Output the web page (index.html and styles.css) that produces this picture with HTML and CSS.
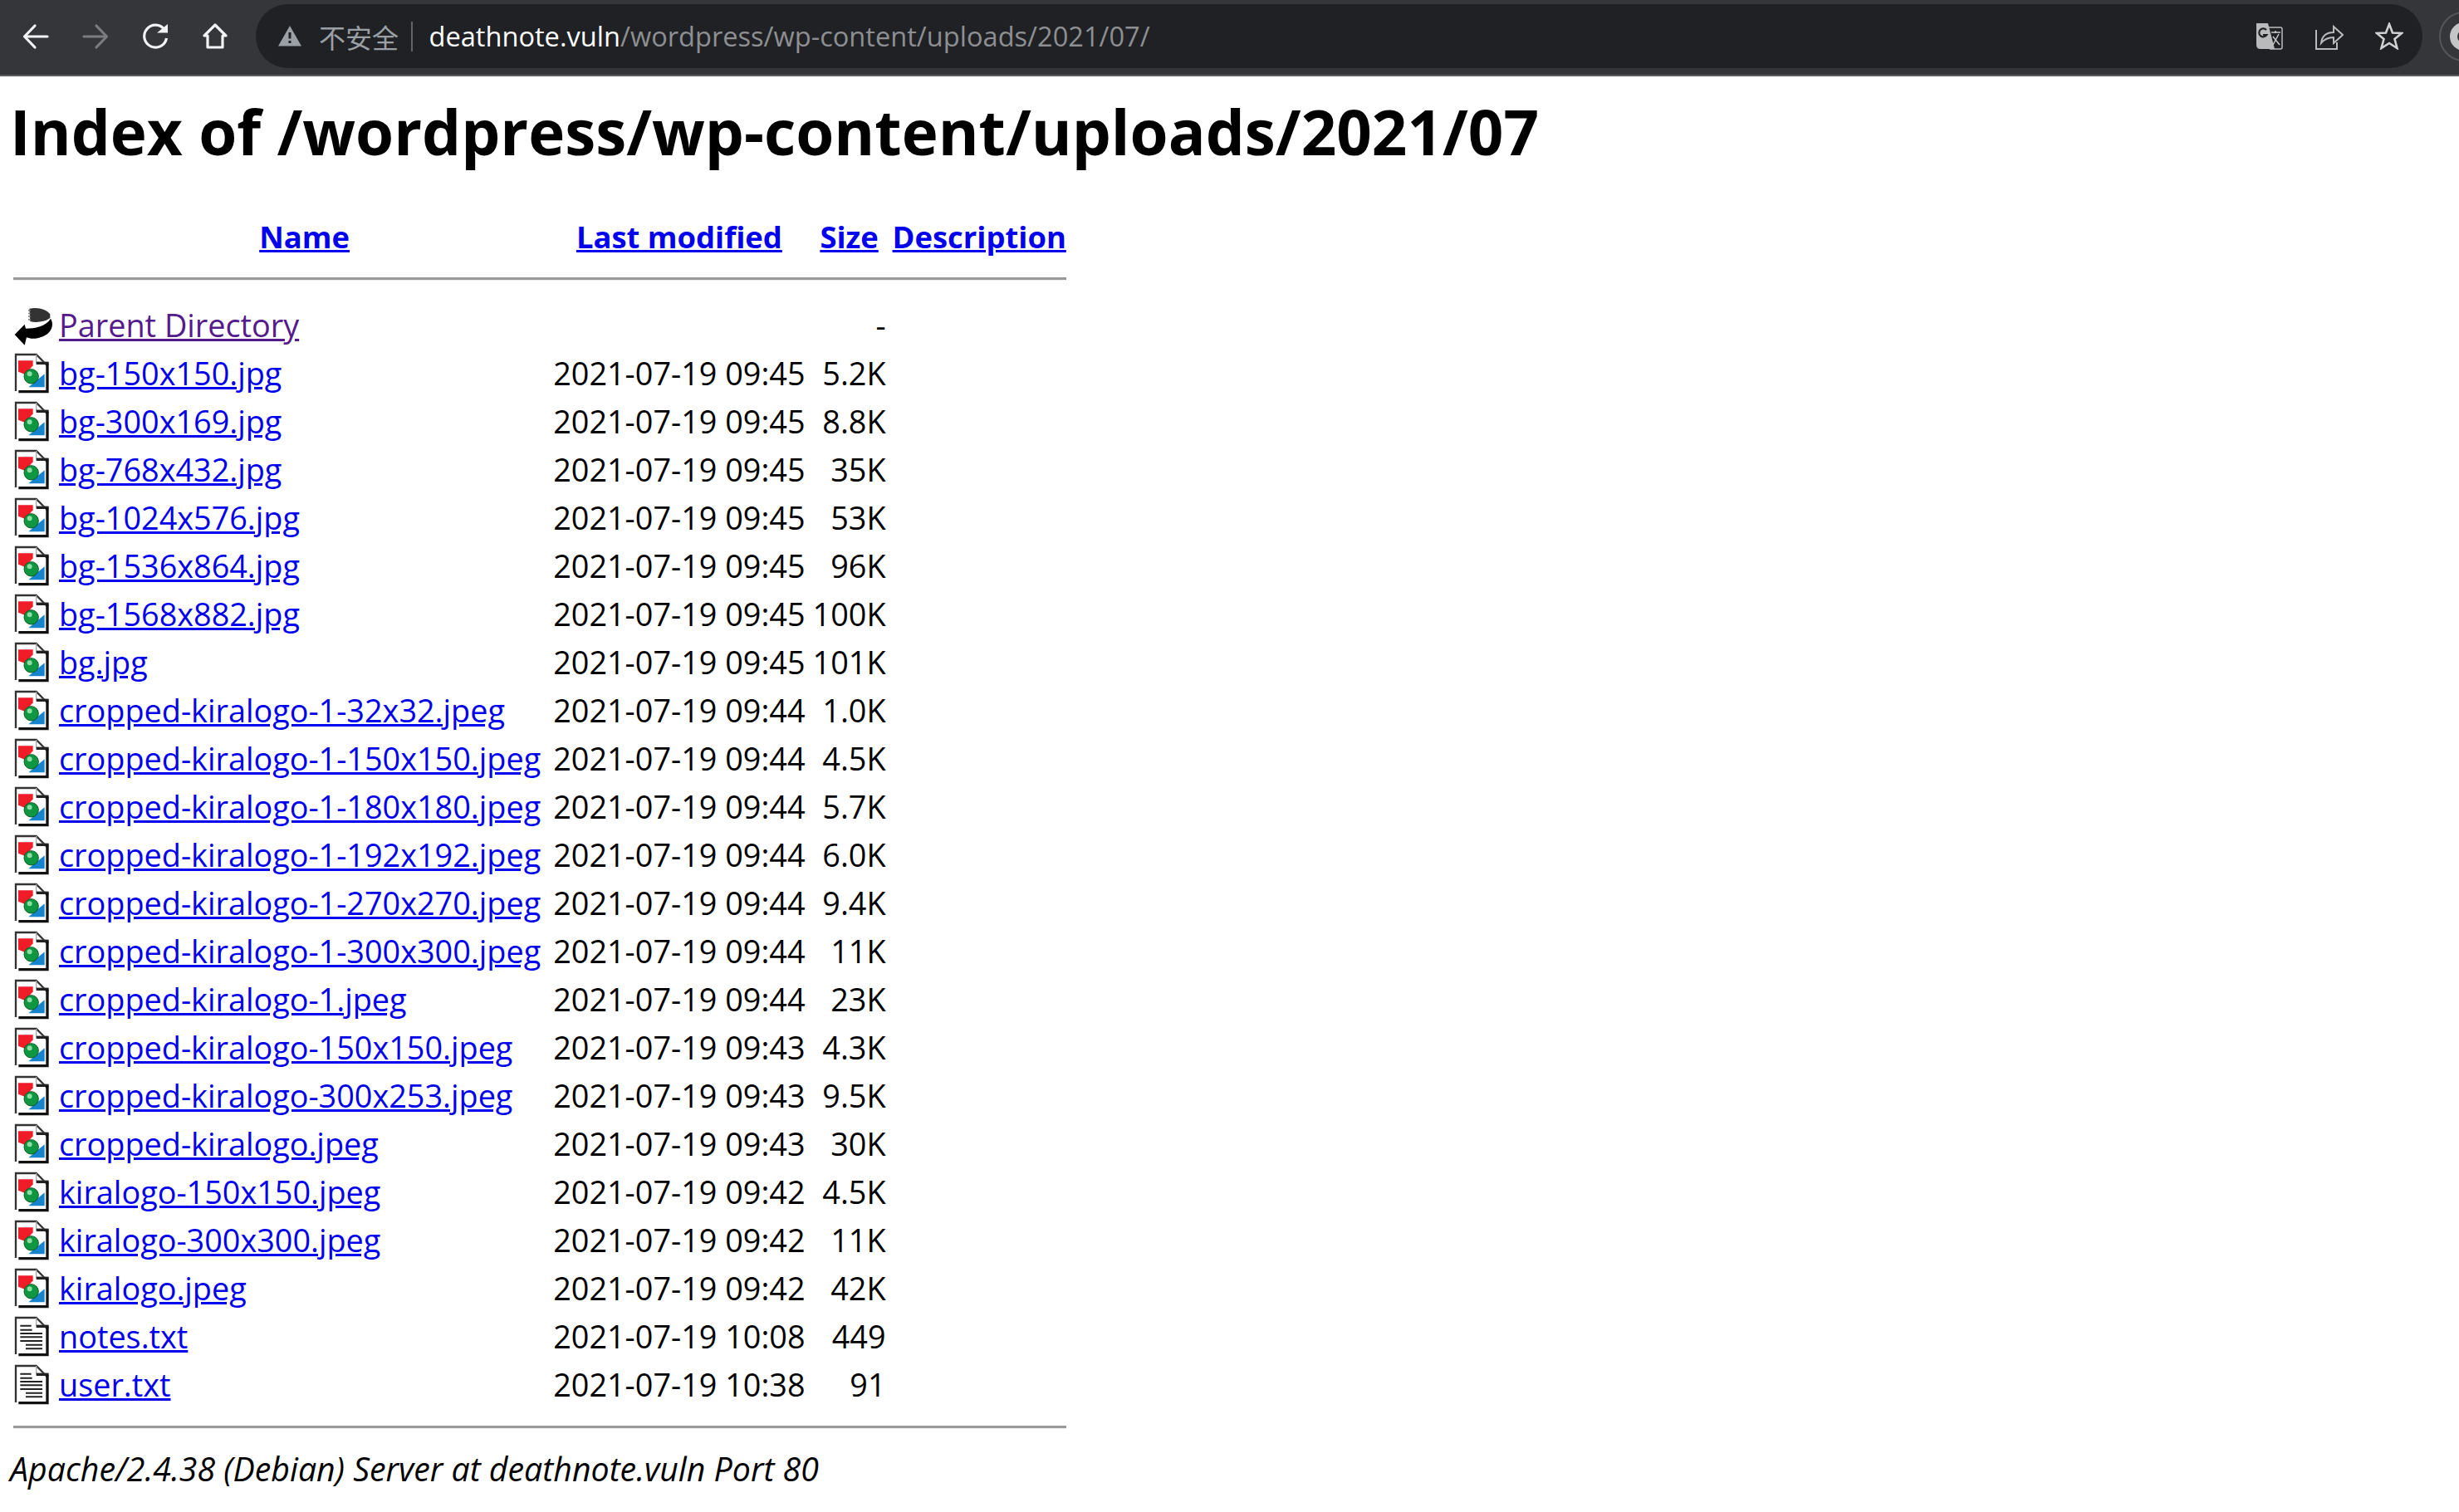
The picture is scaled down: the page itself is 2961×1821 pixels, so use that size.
FILE: index.html
```html
<!DOCTYPE html>
<html lang="zh">
<head>
    <meta charset="UTF-8">
    <title>Index of /wordpress/wp-content/uploads/2021/07</title>
    <link rel="stylesheet" href="styles.css">
</head>
<body>
    <svg class="sprites" width="0" height="0">
        <symbol id="ico-back" viewBox="17 12 150 150">
            <path d="M75 26 78 72C100 78 130 74 150 60L150 46C135 30 112 20 75 26z" fill="#333"/>
            <path d="M75 30V70" stroke="#888" stroke-width="8" stroke-dasharray="5 6"/>
            <path d="M22 120 58 83 62 98C95 98 135 90 152 62 168 90 150 120 115 130 95 137 75 135 65 130L58 158z" fill="#000"/>
        </symbol>
        <symbol id="ico-image" viewBox="17 12 150 150">
            <path d="M26 18H100L142 60V152H26z" fill="#fff"/>
            <path d="M26 150V18H100L142 60" fill="none" stroke="#333" stroke-width="7"/>
            <path d="M100 18V46H142" fill="none" stroke="#aaa" stroke-width="4"/>
            <path d="M100 44H145V54H100z" fill="#222"/>
            <path d="M140 50V152H36" fill="none" stroke="#111" stroke-width="10"/>
            <path d="M35 40H88V58L60 90 35 80z" fill="#f01c28"/>
            <path d="M130 88V136H72z" fill="#1684cc"/>
            <circle cx="82" cy="97" r="26" fill="#0e9640" stroke="#0a5a24" stroke-width="3"/>
            <circle cx="76" cy="88" r="9" fill="#8cdca4"/>
        </symbol>
        <symbol id="ico-text" viewBox="17 12 150 150">
            <path d="M26 18H100L142 60V152H26z" fill="#fff"/>
            <path d="M26 150V18H100L142 60" fill="none" stroke="#333" stroke-width="7"/>
            <path d="M100 18V46H142" fill="none" stroke="#aaa" stroke-width="4"/>
            <path d="M100 44H145V54H100z" fill="#222"/>
            <path d="M140 50V152H36" fill="none" stroke="#111" stroke-width="10"/>
            <path d="M42 47H82M42 62H85M42 75H122M42 88H122M42 102H122M62 116H122M62 130H122" stroke="#222" stroke-width="6"/>
        </symbol>
    </svg>

    <div class="toolbar">
        <svg class="tool" width="36" height="36" viewBox="0 0 36 36"><path d="M32 18H6M17 5 4.500 18 17 31" fill="none" stroke="#f1f3f4" stroke-width="3.200" stroke-linecap="round" stroke-linejoin="round"/></svg>
        <svg class="tool" width="36" height="36" viewBox="0 0 36 36"><path d="M4 18H30M19 5 31.500 18 19 31" fill="none" stroke="#7b7c7f" stroke-width="3.200" stroke-linecap="round" stroke-linejoin="round"/></svg>
        <svg class="tool" width="36" height="36" viewBox="0 0 36 36"><path d="M29 9.500A13.500 13.500 0 1 0 31.500 20" fill="none" stroke="#f1f3f4" stroke-width="3.200"/><path d="M20 13.500H33V3z" fill="#f1f3f4"/></svg>
        <svg class="tool" width="36" height="36" viewBox="0 0 36 36"><path d="M18 4 31 17H27V31H9V17H5z" fill="none" stroke="#f1f3f4" stroke-width="3.200" stroke-linejoin="round"/></svg>
        <div class="omnibox">
            <svg class="warn" width="28" height="25" viewBox="0 0 28 25"><path d="M14 0 28 24.500H0z" fill="#9aa0a6"/><path d="M12.500 8H15.500V15.500H12.500zM12.500 18H15.500V21H12.500z" fill="#202124"/></svg>
            <span class="insecure">不安全</span>
            <span class="sep"></span>
            <span class="url"><span class="host">deathnote.vuln</span>/wordpress/wp-content/uploads/2021/07/</span>
            <span class="omni-actions">
                <svg width="33" height="33" viewBox="0 0 33 33"><path d="M1 1H15L23 32H6Q1 32 1 27z" fill="#b9babb"/><path d="M15 6H30Q32 6 32 8V30Q32 32 30 32H17" fill="none" stroke="#b9babb" stroke-width="1.500"/><path d="M19 12H30M24 10V13M21 27 28 14M21 17 29 27" fill="none" stroke="#c8c9ca" stroke-width="1.500"/><path d="M13 9A5 5 0 1 0 13.500 15H9" fill="none" stroke="#202124" stroke-width="2.200"/></svg>
                <svg width="34" height="33" viewBox="0 0 34 33"><path d="M1 9V32H26V24" fill="none" stroke="#b9babb" stroke-width="2"/><path d="M7 25C8 16 14 12 22 12V5L33 15 22 25V18C15 18 11 20 7 25z" fill="none" stroke="#b9babb" stroke-width="2"/></svg>
                <svg width="34" height="33" viewBox="0 0 34 33"><path d="M17 2 21 12.500 32 13 23.500 20 26.500 31 17 25 7.500 31 10.500 20 2 13 13 12.500z" fill="none" stroke="#d0d1d2" stroke-width="2.600"/></svg>
            </span>
        </div>
        <div class="avatar"><span class="avatar-in"></span></div>
    </div>

    <div class="page">
        <h1>Index of /wordpress/wp-content/uploads/2021/07</h1>
        <table class="listing">
            <tr>
                <th class="col-icon"></th>
                <th><a href="#">Name</a></th>
                <th><a href="#">Last modified</a></th>
                <th class="size-head"><a href="#">Size</a></th>
                <th><a href="#">Description</a></th>
            </tr>
            <tr><th colspan="5"><hr class="rule-top"></th></tr>
            <tr><td class="col-icon"><svg class="ico"><use href="#ico-back"/></svg></td><td><a class="seen" href="#">Parent Directory</a></td><td></td><td class="size">- </td><td></td></tr>
            <tr><td class="col-icon"><svg class="ico"><use href="#ico-image"/></svg></td><td><a href="#">bg-150x150.jpg</a></td><td>2021-07-19 09:45</td><td class="size">5.2K</td><td></td></tr>
            <tr><td class="col-icon"><svg class="ico"><use href="#ico-image"/></svg></td><td><a href="#">bg-300x169.jpg</a></td><td>2021-07-19 09:45</td><td class="size">8.8K</td><td></td></tr>
            <tr><td class="col-icon"><svg class="ico"><use href="#ico-image"/></svg></td><td><a href="#">bg-768x432.jpg</a></td><td>2021-07-19 09:45</td><td class="size">35K</td><td></td></tr>
            <tr><td class="col-icon"><svg class="ico"><use href="#ico-image"/></svg></td><td><a href="#">bg-1024x576.jpg</a></td><td>2021-07-19 09:45</td><td class="size">53K</td><td></td></tr>
            <tr><td class="col-icon"><svg class="ico"><use href="#ico-image"/></svg></td><td><a href="#">bg-1536x864.jpg</a></td><td>2021-07-19 09:45</td><td class="size">96K</td><td></td></tr>
            <tr><td class="col-icon"><svg class="ico"><use href="#ico-image"/></svg></td><td><a href="#">bg-1568x882.jpg</a></td><td>2021-07-19 09:45</td><td class="size">100K</td><td></td></tr>
            <tr><td class="col-icon"><svg class="ico"><use href="#ico-image"/></svg></td><td><a href="#">bg.jpg</a></td><td>2021-07-19 09:45</td><td class="size">101K</td><td></td></tr>
            <tr><td class="col-icon"><svg class="ico"><use href="#ico-image"/></svg></td><td><a href="#">cropped-kiralogo-1-32x32.jpeg</a></td><td>2021-07-19 09:44</td><td class="size">1.0K</td><td></td></tr>
            <tr><td class="col-icon"><svg class="ico"><use href="#ico-image"/></svg></td><td><a href="#">cropped-kiralogo-1-150x150.jpeg</a></td><td>2021-07-19 09:44</td><td class="size">4.5K</td><td></td></tr>
            <tr><td class="col-icon"><svg class="ico"><use href="#ico-image"/></svg></td><td><a href="#">cropped-kiralogo-1-180x180.jpeg</a></td><td>2021-07-19 09:44</td><td class="size">5.7K</td><td></td></tr>
            <tr><td class="col-icon"><svg class="ico"><use href="#ico-image"/></svg></td><td><a href="#">cropped-kiralogo-1-192x192.jpeg</a></td><td>2021-07-19 09:44</td><td class="size">6.0K</td><td></td></tr>
            <tr><td class="col-icon"><svg class="ico"><use href="#ico-image"/></svg></td><td><a href="#">cropped-kiralogo-1-270x270.jpeg</a></td><td>2021-07-19 09:44</td><td class="size">9.4K</td><td></td></tr>
            <tr><td class="col-icon"><svg class="ico"><use href="#ico-image"/></svg></td><td><a href="#">cropped-kiralogo-1-300x300.jpeg</a></td><td>2021-07-19 09:44</td><td class="size">11K</td><td></td></tr>
            <tr><td class="col-icon"><svg class="ico"><use href="#ico-image"/></svg></td><td><a href="#">cropped-kiralogo-1.jpeg</a></td><td>2021-07-19 09:44</td><td class="size">23K</td><td></td></tr>
            <tr><td class="col-icon"><svg class="ico"><use href="#ico-image"/></svg></td><td><a href="#">cropped-kiralogo-150x150.jpeg</a></td><td>2021-07-19 09:43</td><td class="size">4.3K</td><td></td></tr>
            <tr><td class="col-icon"><svg class="ico"><use href="#ico-image"/></svg></td><td><a href="#">cropped-kiralogo-300x253.jpeg</a></td><td>2021-07-19 09:43</td><td class="size">9.5K</td><td></td></tr>
            <tr><td class="col-icon"><svg class="ico"><use href="#ico-image"/></svg></td><td><a href="#">cropped-kiralogo.jpeg</a></td><td>2021-07-19 09:43</td><td class="size">30K</td><td></td></tr>
            <tr><td class="col-icon"><svg class="ico"><use href="#ico-image"/></svg></td><td><a href="#">kiralogo-150x150.jpeg</a></td><td>2021-07-19 09:42</td><td class="size">4.5K</td><td></td></tr>
            <tr><td class="col-icon"><svg class="ico"><use href="#ico-image"/></svg></td><td><a href="#">kiralogo-300x300.jpeg</a></td><td>2021-07-19 09:42</td><td class="size">11K</td><td></td></tr>
            <tr><td class="col-icon"><svg class="ico"><use href="#ico-image"/></svg></td><td><a href="#">kiralogo.jpeg</a></td><td>2021-07-19 09:42</td><td class="size">42K</td><td></td></tr>
            <tr><td class="col-icon"><svg class="ico"><use href="#ico-text"/></svg></td><td><a href="#">notes.txt</a></td><td>2021-07-19 10:08</td><td class="size">449</td><td></td></tr>
            <tr><td class="col-icon"><svg class="ico"><use href="#ico-text"/></svg></td><td><a href="#">user.txt</a></td><td>2021-07-19 10:38</td><td class="size">91</td><td></td></tr>
            <tr><th colspan="5"><hr></th></tr>
        </table>
        <address>Apache/2.4.38 (Debian) Server at deathnote.vuln Port 80</address>
    </div>
</body>
</html>
```

FILE: styles.css
```css
body {
    margin: 0;
    background: #fff;
    color: #000;
    font-family: "Open Sans", "Noto Sans CJK SC", sans-serif;
}

.sprites {
    position: absolute;
}

/* browser bar */
.toolbar {
    display: flex;
    align-items: center;
    height: 87px;
    padding: 0 0 3px 24.500px;
    background: #35363a;
    border-bottom: 2px solid #5b5c5f;
    overflow: hidden;
}

.tool {
    flex: none;
    margin-right: 36px;
}

.omnibox {
    flex: none;
    display: flex;
    align-items: center;
    width: 2609px;
    height: 77px;
    margin-left: -4.500px;
    padding-left: 27px;
    box-sizing: border-box;
    background: #202124;
    border-radius: 39px;
}

.insecure {
    margin-left: 21px;
    font-size: 32px;
    color: #9aa0a6;
}

.sep {
    width: 2px;
    height: 36px;
    margin: 0 19.500px 0 15px;
    background: #5f6368;
}

.url {
    font-size: 32.600px;
    color: #8d8f92;
    white-space: nowrap;
}

.host {
    color: #fff;
}

.omni-actions {
    display: flex;
    gap: 38.500px;
    margin-left: auto;
    margin-right: 23px;
}

.avatar {
    flex: none;
    width: 60px;
    height: 60px;
    margin-left: 20px;
    border: 2px solid #55565a;
    border-radius: 50%;
    box-sizing: border-box;
    display: flex;
    align-items: center;
    justify-content: center;
}

.avatar-in {
    width: 34px;
    height: 34px;
    border: 9px solid #c4c5c6;
    border-radius: 50%;
    box-sizing: border-box;
}

/* listing */
.page {
    padding: 0 12px;
}

h1 {
    margin: 17px 0 47px;
    font-size: 74.500px;
    line-height: 98px;
    font-weight: 700;
}

.listing {
    font-size: 37.800px;
    line-height: 54px;
    border-spacing: 4px;
}

.listing th, .listing td {
    padding: 0;
    white-space: nowrap;
    vertical-align: middle;
}

.listing th {
    text-align: center;
    font-size: 36.400px;
    font-weight: 700;
}

.col-icon {
    width: 51px;
}

.listing td:nth-child(2) {
    padding-right: 11px;
}

.ico {
    display: block;
    width: 50px;
    height: 50px;
}

.listing td.size {
    text-align: right;
    padding: 0 4px 0 5px;
}

.listing th.size-head {
    padding: 0 4px 0 5px;
}

.listing a {
    color: #0000ee;
}

.listing a.seen {
    color: #551a8b;
}

hr {
    margin: 18px 0 20px;
    border: 0;
    border-top: 3px solid #9a9a9a;
    border-bottom: 1px solid #eee;
}

hr.rule-top {
    margin-bottom: 23px;
}

address {
    font-size: 39.300px;
    line-height: 49px;
    font-style: italic;
}
```
